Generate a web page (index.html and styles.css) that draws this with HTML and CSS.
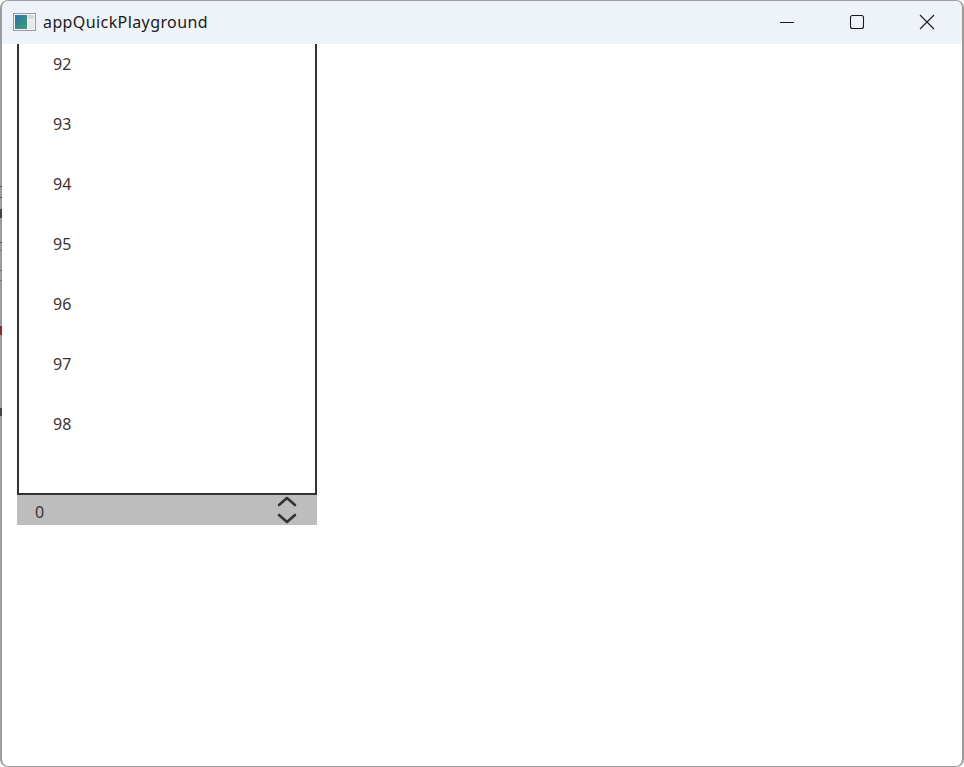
FILE: index.html
```html
<!DOCTYPE html>
<html>
<head>
<meta charset="utf-8">
<link rel="stylesheet" href="styles.css">
</head>
<body>
<div class="window">
  <div class="titlebar">
    <div class="app">
      <svg class="appicon" width="24" height="20" viewBox="0 0 24 20">
        <defs>
          <linearGradient id="g" x1="0" y1="0" x2="1" y2="1">
            <stop offset="0" stop-color="#2f6fb0"/>
            <stop offset="1" stop-color="#3aa070"/>
          </linearGradient>
        </defs>
        <rect x="0.5" y="1.5" width="22" height="17" fill="#f4f4f4" stroke="#9a9a9a"/>
        <rect x="2" y="3" width="12" height="14" fill="url(#g)"/>
        <rect x="15" y="3" width="6" height="4" fill="#d8d8d8"/>
        <rect x="15" y="8" width="6" height="9" fill="#e9e9e9"/>
      </svg>
      <span class="title">appQuickPlayground</span>
    </div>
    <div class="controls">
      <div class="ctl">
        <svg width="16" height="16" viewBox="0 0 16 16"><line x1="1" y1="8.5" x2="15" y2="8.5" stroke="#1a1a1a" stroke-width="1"/></svg>
      </div>
      <div class="ctl">
        <svg width="16" height="16" viewBox="0 0 16 16"><rect x="1.5" y="1.5" width="13" height="13" rx="2" fill="none" stroke="#1a1a1a" stroke-width="1.1"/></svg>
      </div>
      <div class="ctl">
        <svg width="16" height="16" viewBox="0 0 16 16"><path d="M1 1 L15 15 M15 1 L1 15" stroke="#1a1a1a" stroke-width="1.1" fill="none"/></svg>
      </div>
    </div>
  </div>
  <div class="content">
    <div class="panel">
      <div class="list">
        <div class="item">92</div>
        <div class="item">93</div>
        <div class="item">94</div>
        <div class="item">95</div>
        <div class="item">96</div>
        <div class="item">97</div>
        <div class="item">98</div>
      </div>
      <div class="spin">
        <div class="value">0</div>
        <svg class="arrows" width="22" height="30" viewBox="0 0 22 30">
          <path d="M3 10 L11 3 L19 10" fill="none" stroke="#333" stroke-width="2.6" stroke-linecap="round" stroke-linejoin="round"/>
          <path d="M3 20 L11 27 L19 20" fill="none" stroke="#333" stroke-width="2.6" stroke-linecap="round" stroke-linejoin="round"/>
        </svg>
      </div>
    </div>
  </div>
</div>
<div class="marks">
  <i class="m" style="top:186px;height:1px;background:#555"></i>
  <i class="m" style="top:197px;height:1px;background:#555"></i>
  <i class="m" style="top:209px;height:9px;background:#444"></i>
  <i class="m" style="top:242px;height:1px;background:#555"></i>
  <i class="m" style="top:250px;height:1px;background:#777"></i>
  <i class="m" style="top:270px;height:1px;background:#9a4aa8"></i>
  <i class="m" style="top:280px;height:1px;background:#9a4aa8"></i>
  <i class="m" style="top:326px;height:9px;background:#8a2a2a"></i>
  <i class="m" style="top:408px;height:8px;background:#444"></i>
</div>
</body>
</html>
```

FILE: styles.css
```css
html, body {
  margin: 0;
  padding: 0;
  width: 964px;
  height: 767px;
  overflow: hidden;
  background: #ffffff;
}

body {
  position: relative;
}

.window {
  position: relative;
  box-sizing: border-box;
  width: 964px;
  height: 767px;
  border: 1px solid #9c9c9c;
  border-left-width: 2px;
  border-right-width: 2px;
  border-radius: 8px;
  overflow: hidden;
  background: #ffffff;
  display: flex;
  flex-direction: column;
  font-family: "Noto Sans", "Open Sans", sans-serif;
}

.titlebar {
  height: 43px;
  flex: 0 0 43px;
  background: #eef2f9;
  display: flex;
  align-items: center;
  justify-content: space-between;
}

.app {
  display: flex;
  align-items: center;
  padding-left: 11px;
}

.appicon {
  display: block;
  margin-top: -1px;
}

.title {
  margin-left: 6px;
  font-size: 16px;
  color: #1a1a1a;
  letter-spacing: 0.4px;
  margin-top: -1px;
}

.controls {
  display: flex;
  height: 100%;
}

.ctl {
  width: 70px;
  display: flex;
  align-items: center;
  justify-content: center;
}

.ctl svg {
  display: block;
  margin-top: -2px;
}

.content {
  flex: 1;
  padding-left: 15px;
  overflow: hidden;
}

.panel {
  width: 300px;
  display: flex;
  flex-direction: column;
}

.list {
  box-sizing: border-box;
  height: 451px;
  border: 2px solid #333333;
  border-top: none;
}

.item {
  height: 60px;
  box-sizing: border-box;
  padding-top: 9px;
  padding-left: 34px;
  line-height: 22px;
  font-size: 16px;
  color: #3b3330;
}

.spin {
  height: 30px;
  background: #bdbdbd;
  display: flex;
  align-items: center;
  justify-content: space-between;
}

.value {
  margin-left: 18px;
  margin-top: 4px;
  font-size: 16px;
  line-height: 22px;
  color: #3b3330;
}

.arrows {
  display: block;
  margin-right: 19px;
}

.marks .m {
  position: absolute;
  left: 0;
  width: 2px;
  display: block;
}
```
